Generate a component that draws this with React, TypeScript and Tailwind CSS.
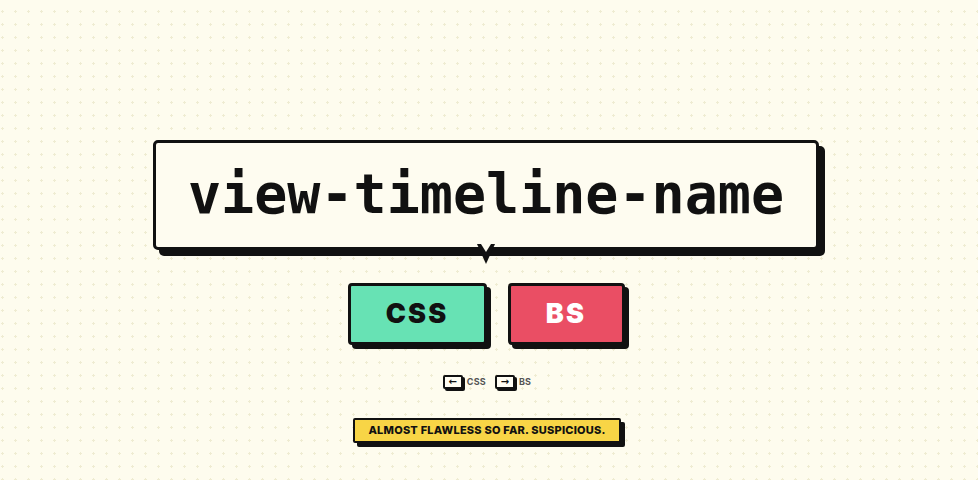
import React from 'react';

const Key = ({ arrow, label }: { arrow: string; label: string }) => (
  <div className="flex items-center gap-[3px]">
    <span className="flex h-[14px] w-[20px] items-center justify-center rounded-[2px] border-2 border-[#111] bg-[#fffdf3] text-[10px] leading-none font-bold text-[#111] shadow-[2px_2px_0_#111] [font-family:'DejaVu_Sans',sans-serif]">
      {arrow}
    </span>
    <span className="ml-[1px] text-[9px] font-bold tracking-wide text-[#555] [font-family:Inter,sans-serif]">{label}</span>
  </div>
);

export default function App() {
  return (
    <div className="flex min-h-[480px] w-full flex-col items-center bg-[#fefcee] bg-[radial-gradient(#efecd2_1px,transparent_1.3px)] bg-[size:13px_13px] bg-[position:-4px_5px] pt-[140px] text-[#111]">
      {/* term bubble */}
      <div className="relative ml-[-6px] flex h-[110px] w-[666px] items-center justify-center rounded-[5px] border-3 border-[#111] bg-[#fefcf0] shadow-[6px_6px_0_#111]">
        <span className="mt-[-2px] text-[55px] font-bold leading-none [font-family:'DejaVu_Sans_Mono',monospace]">view-timeline-name</span>
        <svg className="absolute top-full left-1/2 mt-[-3px] ml-[-9px]" width="18" height="20" viewBox="0 0 18 20">
          <polygon points="0,0 18,0 9,20" fill="#111" />
          <polygon points="4,0 14,0 9,8" fill="#fefcf0" />
        </svg>
      </div>

      {/* answer buttons */}
      <div className="mt-[33px] ml-[-6px] flex gap-[21px] [font-family:Inter,sans-serif]">
        <button className="flex h-[62px] w-[139px] items-center justify-center rounded-[4px] border-3 border-[#111] bg-[#67e2b4] text-[27px] font-black tracking-[0.08em] text-[#111] shadow-[4px_4px_0_#111]">
          CSS
        </button>
        <button className="flex h-[62px] w-[117px] items-center justify-center rounded-[4px] border-3 border-[#111] bg-[#ea4e64] text-[27px] font-black tracking-[0.08em] text-white shadow-[4px_4px_0_#111]">
          BS
        </button>
      </div>

      {/* keyboard hints */}
      <div className="mt-[30px] ml-[-4px] flex gap-[9px]">
        <Key arrow="←" label="CSS" />
        <Key arrow="→" label="BS" />
      </div>

      {/* status banner */}
      <div className="mt-[29px] ml-[-4px] flex h-[25px] items-center rounded-[2px] border-2 border-[#111] bg-[#f8d546] px-[13px] text-[11px] font-extrabold tracking-[0.02em] text-[#111] shadow-[4px_4px_0_#111] [font-family:Inter,sans-serif]">
        ALMOST FLAWLESS SO FAR. SUSPICIOUS.
      </div>
    </div>
  );
}
